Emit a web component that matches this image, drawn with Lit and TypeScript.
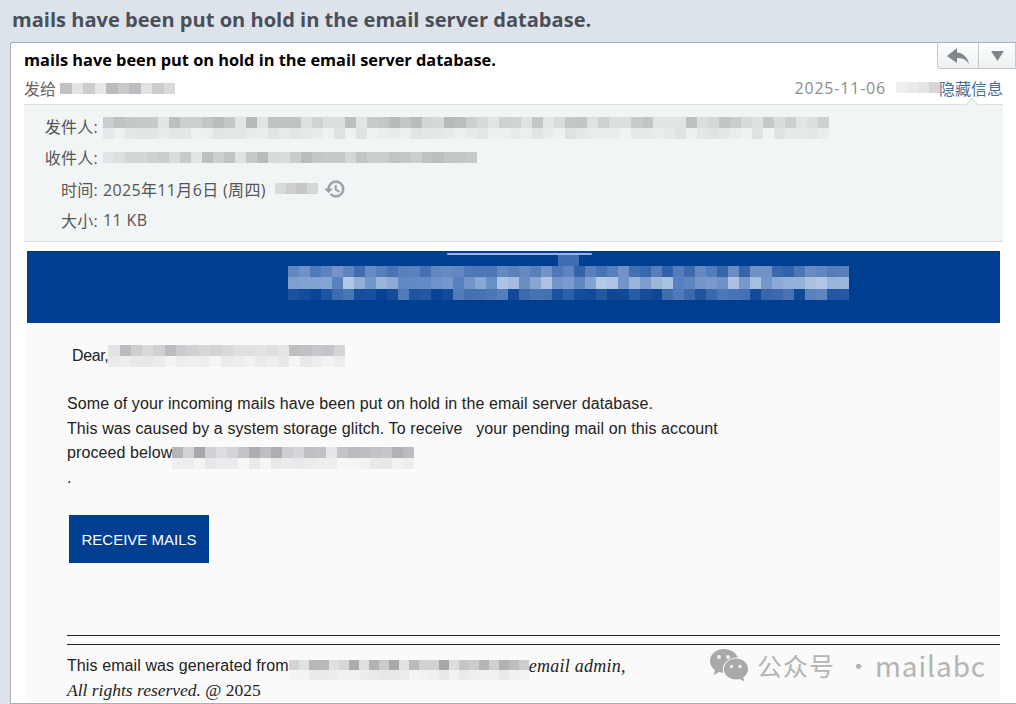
import { LitElement, html, css, svg } from "lit";
import { customElement, property } from "lit/decorators.js";

// pixelated redaction block, cells are seeded so every render is the same
function rng(seed: number) {
  let s = seed;
  return () => {
    s = (s * 16807) % 2147483647;
    return (s % 1000) / 1000;
  };
}

function mix(a: number[], b: number[], t: number) {
  return `rgb(${a.map((v, i) => Math.round(v + (b[i] - v) * t)).join(",")})`;
}

@customElement("mosaic-strip")
export class MosaicStrip extends LitElement {
  @property({ type: Number }) seed = 7;
  @property({ type: Number }) cols = 20;
  @property({ type: Number }) cell = 11;
  @property({ type: Number }) cellh = 0;
  @property({ type: Array }) rows: number[][][] = [];

  static styles = css`
    :host {
      display: inline-block;
      vertical-align: middle;
      line-height: 0;
      filter: blur(0.5px);
    }
    .grid {
      display: grid;
    }
    .grid span {
      display: block;
    }
  `;

  render() {
    const r = rng(this.seed);
    const cells = [];
    for (const [a, b] of this.rows) {
      for (let i = 0; i < this.cols; i++) {
        cells.push(html`<span style="background:${mix(a, b, r())}"></span>`);
      }
    }
    return html`<div
      class="grid"
      style="grid-template-columns:repeat(${this.cols},${this.cell}px);grid-auto-rows:${this.cellh || this.cell}px"
    >
      ${cells}
    </div>`;
  }
}

const FAINT = [[246, 246, 246], [230, 231, 232]];
const GREY = [[[230, 232, 232], [188, 188, 192]], FAINT];
const PROCEED = [[[232, 232, 236], [166, 166, 170]], FAINT];
const FOOTER = [[[226, 226, 228], [165, 165, 168]], FAINT];
const PANEL = [
  [[226, 230, 230], [182, 186, 186]],
  [[240, 243, 243], [222, 226, 226]],
];
const BANNER = [
  [[48, 98, 170], [118, 148, 200]],
  [[84, 126, 190], [184, 204, 230]],
  [[8, 66, 148], [96, 134, 192]],
];

const replyIcon = svg`<path d="M0 9 10 1v4.500c6 .5 10 4 12 11.500-3-4.500-6.500-6-12-6V16z" fill="#7f878d" />`;
const caretIcon = svg`<path d="M0 0h14L7 11z" fill="#7f878d" />`;
const historyIcon = svg`<path d="M13 3a9 9 0 0 0-9 9H1l3.890 3.890.07.14L9 12H6c0-3.870 3.130-7 7-7s7 3.130 7 7-3.130 7-7 7c-1.930 0-3.680-.79-4.940-2.060l-1.420 1.420A8.954 8.954 0 0 0 13 21a9 9 0 0 0 0-18zm-1 5v5l4.280 2.540.72-1.210-3.500-2.080V8H12z" fill="#999ea2" stroke="#999ea2" stroke-width="0.8" />`;
const wechatIcon = svg`
  <path d="M14 0C6 0 0 5.300 0 12c0 3.800 2 7 5 9.200L3.500 26l5.700-2.900c1.300.4 2.700.6 4.100.7-.4-1.200-.6-2.300-.6-3.500C12.700 13.800 19 8.600 26.700 8.600h1.100C26.200 3.600 20.600 0 14 0z" fill="#a9a9a9" />
  <path d="M38 20c0-6-5.500-10.500-12-10.500S14 14 14 20s5.500 10.500 12 10.500c1.300 0 2.600-.2 3.800-.5l4.700 2.500-1.300-4C36.200 26.500 38 23.500 38 20z" fill="#a9a9a9" />
  <circle cx="9" cy="8" r="2" fill="#f0f0f0" /><circle cx="18" cy="8" r="2" fill="#f0f0f0" />
  <circle cx="21.500" cy="17.500" r="1.700" fill="#f0f0f0" /><circle cx="30" cy="17.500" r="1.700" fill="#f0f0f0" />
`;

@customElement("app-root")
export class AppRoot extends LitElement {
  static styles = css`
    :host {
      display: block;
      width: 1016px;
      height: 704px;
      overflow: hidden;
      position: relative;
      background: #dde3ea;
      font-family: "Open Sans", "Noto Sans CJK SC", sans-serif;
    }
    .page-title {
      height: 42px;
      padding-left: 12px;
      font-size: 20.070px;
      font-weight: 700;
      line-height: 40px;
      color: #4a4f5a;
      white-space: nowrap;
    }
    .card {
      margin-left: 10px;
      height: 662px;
      box-sizing: border-box;
      background: #fff;
      border: 1px solid #a8b0ba;
      border-right: none;
      border-radius: 3px 0 0 0;
      position: relative;
    }
    .actions {
      position: absolute;
      top: -1px;
      right: 0;
      display: flex;
      height: 27px;
      box-sizing: border-box;
      border: 1px solid #c4c9cd;
      border-top-color: #a8b0ba;
      border-radius: 0 0 0 3px;
      background: linear-gradient(#fdfdfd, #eef0f1);
    }
    .actions div {
      display: flex;
      align-items: center;
      justify-content: center;
    }
    .reply {
      width: 40px;
      border-right: 1px solid #c4c9cd;
    }
    .caret {
      width: 36px;
    }
    .head {
      padding: 0 13px;
    }
    .subject {
      font-size: 16.350px;
      font-weight: 700;
      line-height: 22px;
      padding-top: 6px;
      color: #000;
    }
    .meta {
      display: flex;
      align-items: center;
      justify-content: space-between;
      height: 34px;
      box-sizing: border-box;
      border-bottom: 1px solid #dcdfe0;
      font-size: 16px;
      color: #666;
      position: relative;
    }
    .meta .left,
    .meta .right {
      display: flex;
      align-items: center;
    }
    .date {
      color: #8c8c8c;
      letter-spacing: 0.8px;
    }
    .meta-blur {
      margin: 2px 0 0 4px;
    }
    .time-blur {
      margin: 0 -1px 0 10px;
    }
    .hide-link {
      color: #47709f;
      position: relative;
    }
    .notch {
      position: absolute;
      right: 26px;
      bottom: -1px;
      width: 10px;
      height: 10px;
      margin-bottom: -5px;
      background: #f2f5f5;
      transform: rotate(45deg);
      border-left: 1px solid #dcdfe0;
      border-top: 1px solid #dcdfe0;
      box-sizing: border-box;
    }
    .details {
      margin: 0 13px;
      height: 137px;
      box-sizing: border-box;
      padding-top: 5px;
      background: #f2f5f5;
      border-bottom: 1px solid #dcdfe0;
      font-size: 16px;
      color: #555;
      letter-spacing: 0.35px;
    }
    .drow {
      display: flex;
      align-items: center;
      height: 31.500px;
    }
    .dlabel {
      width: 74px;
      text-align: right;
      margin-right: 5px;
      flex: none;
      letter-spacing: 0.25px;
    }
    .from-blur {
      margin-top: 4px;
    }
    .hist-blur {
      margin-left: 9px;
    }
    .history {
      margin-left: 6px;
    }
    .email {
      margin: 9px 16px 0 16px;
      height: 451px;
      background: #fafafa;
      font-family: "Liberation Sans", sans-serif;
      font-size: 16px;
      letter-spacing: 0.1px;
      color: #222;
      position: relative;
    }
    .banner {
      height: 72px;
      background: #003e92;
      display: flex;
      align-items: center;
      padding-left: 261px;
      position: relative;
    }
    .banner mosaic-strip {
      margin-top: -8px;
    }
    .glint {
      position: absolute;
      left: 420px;
      top: 2px;
      width: 145px;
      height: 2px;
      background: #8fb6e6;
      border-radius: 1px;
    }
    .peak {
      position: absolute;
      left: 531px;
      top: 4px;
      width: 21px;
      height: 11px;
      background: #3f6db4;
    }
    .content {
      padding: 9px 0 0 40px;
    }
    .dear {
      padding-left: 5px;
      height: 48px;
      line-height: 24px;
      display: flex;
      align-items: center;
      letter-spacing: -0.4px;
    }
    .para {
      margin-top: 12px;
      line-height: 24.500px;
    }
    .spill {
      vertical-align: top;
      margin: 6px 0 -11px 0;
    }
    .cta {
      display: flex;
      align-items: center;
      justify-content: center;
      margin: 25px 0 0 2px;
      width: 140px;
      height: 48px;
      background: #003e92;
      color: #fff;
      font-size: 15px;
      letter-spacing: 0;
    }
    .rule {
      border-top: 1px solid #222;
      height: 8px;
    }
    .foot {
      margin-top: 72px;
      padding-bottom: 1px;
    }
    .foot-line {
      display: flex;
      align-items: center;
      height: 24px;
      white-space: nowrap;
    }
    .foot-line mosaic-strip {
      align-self: flex-start;
      margin-top: 6px;
      height: 22px;
    }
    .serif {
      font-family: "Liberation Serif", serif;
      font-style: italic;
      font-size: 18px;
      letter-spacing: 0.25px;
    }
    .rights {
      font-size: 17.500px;
      letter-spacing: 0;
      white-space: pre;
    }
    .rights b {
      font-weight: 400;
      font-style: normal;
    }
    .watermark {
      position: absolute;
      left: 710px;
      top: 645px;
      display: flex;
      align-items: center;
      font-family: "Noto Sans CJK SC", sans-serif;
      color: #b4b4b4;
      white-space: nowrap;
    }
    .wm-cn {
      margin-left: 9px;
      font-size: 25px;
      letter-spacing: 1px;
    }
    .wm-dot {
      margin-left: 11px;
      font-size: 25px;
    }
    .wm-en {
      margin-left: 4px;
      font-size: 28px;
      letter-spacing: 0.9px;
    }
  `;

  render() {
    return html`
      <div class="page-title">mails have been put on hold in the email server database.</div>
      <div class="card">
        <div class="actions">
          <div class="reply"><svg width="22" height="18" viewBox="0 0 22 18">${replyIcon}</svg></div>
          <div class="caret"><svg width="13" height="10" viewBox="0 0 14 11">${caretIcon}</svg></div>
        </div>
        <div class="head">
          <div class="subject">mails have been put on hold in the email server database.</div>
          <div class="meta">
            <div class="left">
              发给<mosaic-strip class="meta-blur" seed="11" cols="10" cell="11.500" .rows=${[GREY[0]]}></mosaic-strip>
            </div>
            <div class="right">
              <span class="date">2025-11-06</span>
              <mosaic-strip class="time-blur" seed="5" cols="4" cell="11" .rows=${[[[240, 240, 240], [214, 214, 214]]]}></mosaic-strip>
              <span class="hide-link">隐藏信息</span>
            </div>
            <div class="notch"></div>
          </div>
        </div>
        <div class="details">
          <div class="drow">
            <span class="dlabel">发件人:</span>
            <mosaic-strip class="from-blur" seed="23" cols="66" cell="11" .rows=${PANEL}></mosaic-strip>
          </div>
          <div class="drow">
            <span class="dlabel">收件人:</span>
            <mosaic-strip seed="31" cols="34" cell="11" .rows=${[PANEL[0]]}></mosaic-strip>
          </div>
          <div class="drow">
            <span class="dlabel">时间:</span>
            2025年11月6日 (周四)<mosaic-strip class="hist-blur" seed="9" cols="4" cell="10.700" .rows=${[[[226, 228, 228], [190, 192, 192]]]}></mosaic-strip>
            <svg class="history" width="22" height="22" viewBox="0 0 24 24">${historyIcon}</svg>
          </div>
          <div class="drow">
            <span class="dlabel">大小:</span>
            11 KB
          </div>
        </div>
        <div class="email">
          <div class="banner">
            <div class="glint"></div>
            <div class="peak"></div>
            <mosaic-strip seed="17" cols="51" cell="11" cellh="11.300" .rows=${BANNER}></mosaic-strip>
          </div>
          <div class="content">
            <div class="dear">
              Dear,<mosaic-strip seed="41" cols="21" cell="11.300" .rows=${GREY}></mosaic-strip>
            </div>
            <div class="para">
              Some of your incoming mails have been put on hold in the email server database.<br />
              This was caused by a system storage glitch. To receive &nbsp; your pending mail on this account<br />
              proceed below<mosaic-strip class="spill" seed="53" cols="22" cell="11" .rows=${PROCEED}></mosaic-strip><br />
              .
            </div>
            <div class="cta">RECEIVE MAILS</div>
            <div class="foot">
              <div class="rule"></div>
              <div class="rule"></div>
            </div>
            <div class="foot-line">
              This email was generated from<mosaic-strip seed="61" cols="24" cell="10" .rows=${FOOTER}></mosaic-strip><span class="serif">email admin,</span>
            </div>
            <div class="foot-line"><span class="serif rights">All rights reserved. <b>@ 2025</b></span></div>
          </div>
        </div>
      </div>
      <div class="watermark">
        <svg width="38" height="33" viewBox="0 0 38 33">${wechatIcon}</svg>
        <span class="wm-cn">公众号</span><span class="wm-dot">·</span><span class="wm-en">mailabc</span>
      </div>
    `;
  }
}
